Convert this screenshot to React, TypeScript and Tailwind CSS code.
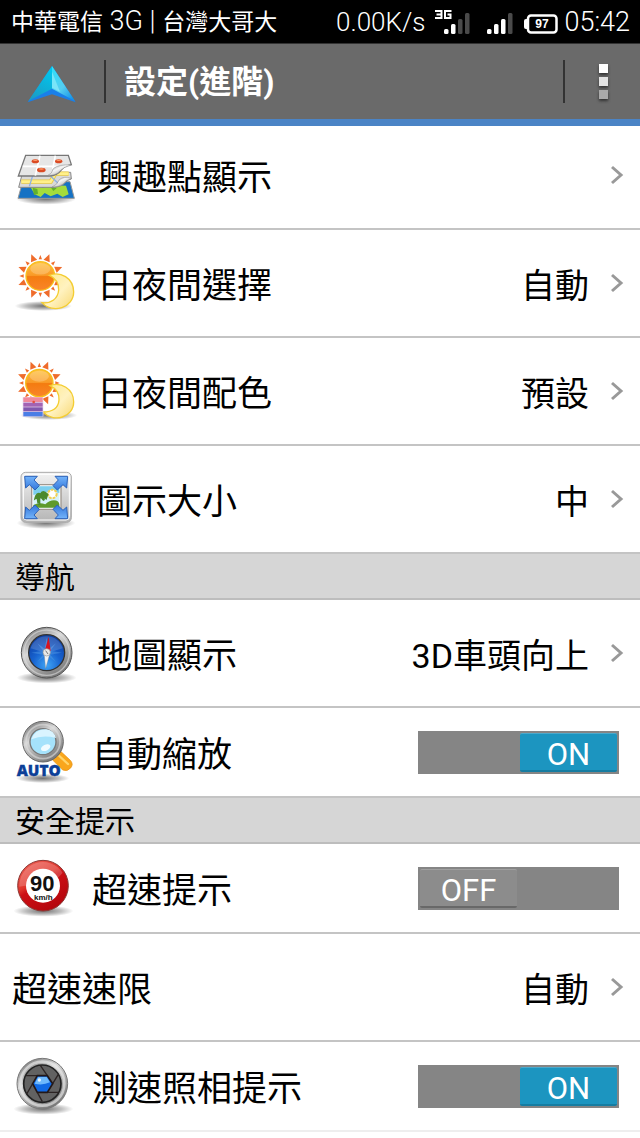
import { useState, type ReactNode } from "react";

/* ---------- status bar ---------- */

function SignalBars({ level, label }: { level: number; label?: string }) {
  const bars = [
    { x: 9, y: 20, h: 5 },
    { x: 16, y: 15, h: 10 },
    { x: 23, y: 10, h: 15 },
    { x: 30, y: 4, h: 21 },
  ];
  return (
    <svg viewBox="0 0 36 26" className="h-[26px] w-9" aria-label="signal">
      {label && (
        <g fill="none" stroke="#fff" strokeWidth="2">
          <path d="M0 2h6.500v7H0M1.500 5.500h5" />
          <path d="M16.500 2H10v7h5.500V5.500H12.500" />
        </g>
      )}
      {bars.map((b, i) => (
        <rect key={b.x} x={b.x} y={b.y} width="4.500" height={b.h} rx="1.500" fill={i < level ? "#fff" : "#4a4a4a"} />
      ))}
    </svg>
  );
}

function Battery() {
  return (
    <svg viewBox="0 0 34 20" className="mt-1 h-5 w-[34px]" aria-label="battery">
      <path d="M0 7q0-2 2-2h2v10H2q-2 0-2-2z" fill="#fff" />
      <rect x="4" y="1.500" width="28.500" height="17" rx="3" fill="none" stroke="#fff" strokeWidth="2.500" />
      <text x="18" y="14" textAnchor="middle" fontSize="12" fontWeight="700" fill="#fff" className="font-['Liberation_Sans',sans-serif]">
        97
      </text>
    </svg>
  );
}

function StatusBar() {
  return (
    <div className="flex h-11 items-center justify-between border-b border-[#333] bg-black pl-[11px] pr-[10px] text-white">
      <span className="whitespace-nowrap text-[23px] leading-8">
        中華電信<span className="text-[27px] font-light"> 3G | </span>台灣大哥大
      </span>
      <div className="flex items-center">
        <span className="mr-[10px] text-[26px] font-light leading-8">0.00K/s</span>
        <SignalBars level={2} label="3G" />
        <span className="ml-[7px] mr-[10px] flex">
          <SignalBars level={3} />
        </span>
        <Battery />
        <span className="ml-[6px] text-[27px] font-light leading-8">05:42</span>
      </div>
    </div>
  );
}

/* ---------- title bar ---------- */

function Logo() {
  return (
    <svg viewBox="0 0 150 114" className="mt-1 h-[38px] w-[50px]" aria-hidden="true">
      <defs>
        <linearGradient id="logoL" x1="0.700" y1="0" x2="0.300" y2="1">
          <stop offset="0" stopColor="#00c6ee" />
          <stop offset="1" stopColor="#1b9cc4" />
        </linearGradient>
        <linearGradient id="logoR" x1="0" y1="0" x2="0.800" y2="1">
          <stop offset="0" stopColor="#2fe0fa" />
          <stop offset="0.600" stopColor="#55cdf0" />
          <stop offset="1" stopColor="#1594e8" />
        </linearGradient>
      </defs>
      <path d="M75 3 2 112l73-24 71 24z" fill="#1a7fe8" />
      <path d="M75 3 4 108l71-37z" fill="url(#logoL)" />
      <path d="M75 3v68l69 37z" fill="url(#logoR)" />
      <path d="M75 20v48l24 12z" fill="#a4f2fb" opacity="0.550" />
    </svg>
  );
}

function TitleBar() {
  return (
    <header className="relative z-10 flex h-[82px] items-center border-b-[7px] border-[#4b84c6] bg-[#6a6a6a] pl-[27px] pr-[13px] text-white">
      <Logo />
      <span className="ml-[27px] h-[43px] w-[2px] bg-[#333]" />
      <h1 className="ml-[18px] flex-1 text-[32px] font-bold leading-10">設定(進階)</h1>
      <span className="h-[43px] w-[2px] bg-[#333]" />
      <button type="button" aria-label="選單" className="ml-[14px] flex h-12 w-12 flex-col items-center justify-center gap-1">
        <span className="h-[9px] w-[9px] bg-white shadow-[0_2px_3px_#333]" />
        <span className="h-[9px] w-[9px] bg-[#e2e2e2] shadow-[0_2px_3px_#333]" />
        <span className="h-[9px] w-[9px] bg-[#aaa] shadow-[0_2px_3px_#333]" />
      </button>
    </header>
  );
}

/* ---------- row icons ---------- */

function IconFrame({ viewBox, children }: { viewBox: string; children: ReactNode }) {
  return (
    <svg viewBox={viewBox} className="h-16 w-16 shrink-0" aria-hidden="true">
      {children}
    </svg>
  );
}

// Gradients shared by the icons, defined once for the page.
function SharedDefs() {
  return (
    <svg className="absolute h-0 w-0" aria-hidden="true">
      <defs>
        <radialGradient id="shade">
          <stop offset="0" stopColor="#000" stopOpacity="0.550" />
          <stop offset="0.600" stopColor="#000" stopOpacity="0.250" />
          <stop offset="1" stopColor="#000" stopOpacity="0" />
        </radialGradient>
        <linearGradient id="sun" x1="0" y1="0" x2="0" y2="1">
          <stop offset="0" stopColor="#ffc13a" />
          <stop offset="0.480" stopColor="#f99a28" />
          <stop offset="0.520" stopColor="#f47c10" />
          <stop offset="1" stopColor="#f9852a" />
        </linearGradient>
        <linearGradient id="moon" x1="0" y1="0" x2="1" y2="1">
          <stop offset="0" stopColor="#ffe98a" />
          <stop offset="0.550" stopColor="#fff2c0" />
          <stop offset="1" stopColor="#f8d874" />
        </linearGradient>
        <linearGradient id="steel" x1="0.200" y1="0" x2="0.800" y2="1">
          <stop offset="0" stopColor="#777" />
          <stop offset="0.350" stopColor="#d8d8d8" />
          <stop offset="0.650" stopColor="#a5a5a5" />
          <stop offset="1" stopColor="#6c6c6c" />
        </linearGradient>
        <linearGradient id="panel" x1="0" y1="0" x2="0" y2="1">
          <stop offset="0" stopColor="#f3f3f3" />
          <stop offset="1" stopColor="#b4b4b4" />
        </linearGradient>
        <linearGradient id="arrow" x1="0" y1="0" x2="0" y2="1">
          <stop offset="0" stopColor="#74b4fa" />
          <stop offset="1" stopColor="#3377dc" />
        </linearGradient>
        <radialGradient id="blue" cx="0.500" cy="0.850" r="0.800">
          <stop offset="0" stopColor="#3fa4f5" />
          <stop offset="0.500" stopColor="#1762cf" />
          <stop offset="1" stopColor="#0d3fa5" />
        </radialGradient>
        <linearGradient id="red" x1="0" y1="0" x2="0.600" y2="1">
          <stop offset="0" stopColor="#f0695f" />
          <stop offset="0.450" stopColor="#e0352c" />
          <stop offset="0.550" stopColor="#cc1016" />
          <stop offset="1" stopColor="#b5060d" />
        </linearGradient>
        <linearGradient id="curl" x1="0" y1="0" x2="1" y2="1">
          <stop offset="0" stopColor="#8a8a8a" />
          <stop offset="0.400" stopColor="#f6f6f6" />
          <stop offset="1" stopColor="#8f8f8f" />
        </linearGradient>
      </defs>
    </svg>
  );
}

function MapLayersIcon() {
  return (
    <IconFrame viewBox="42 12 192 192">
      <ellipse cx="138" cy="180" rx="90" ry="17" fill="url(#shade)" />
      <path d="M68 128h142l13 50H54z" fill="#1672c4" stroke="#999" strokeWidth="3" />
      <path d="M90 142l24-6 14 10 26-8 44 2 8 26-18 8-16-10-20 8-18-10-12 12-18-8z" fill="#a4dc3c" />
      <path d="M98 146l14 4 2 14-12 4zM150 142l20 6-10 8z" fill="#62b02c" />
      <path d="M68 100h144l2 20q-12 2-20 12t-30 13H56z" fill="#d9d9d9" stroke="#888" strokeWidth="3" />
      <path d="M64 128h88l14-24h40" fill="none" stroke="#e9c93c" strokeWidth="13" />
      <path d="M64 128h88l14-24h40" fill="none" stroke="#fff08a" strokeWidth="8" />
      <path d="M152 112l28 26M100 104l-12 38" stroke="#8eb0e4" strokeWidth="4" />
      <path d="M156 144q16-6 22-22 14-12 36-4-16 6-26 18-10 8-32 8z" fill="url(#curl)" stroke="#888" strokeWidth="1.500" />
      <path d="M77 49h128l9 28q-20 2-32 18-10 15-34 16H55z" fill="#e6e6e6" stroke="#777" strokeWidth="4" />
      <path d="M68 82h116M120 50l-14 60M166 50l-8 40" stroke="#fff" strokeWidth="5" />
      <path d="M144 109q12-4 16-20 16-14 54-11-24 6-34 18-12 14-36 13z" fill="url(#curl)" stroke="#888" strokeWidth="1.500" />
      <g fill="#db4b24">
        <ellipse cx="106" cy="67" rx="11" ry="6" />
        <ellipse cx="176" cy="67" rx="11" ry="6" />
        <ellipse cx="124" cy="93" rx="13" ry="7" />
      </g>
      <g fill="#ff9d6a">
        <ellipse cx="106" cy="64" rx="7" ry="2" />
        <ellipse cx="176" cy="64" rx="7" ry="2" />
        <ellipse cx="124" cy="90" rx="8" ry="2" />
      </g>
    </IconFrame>
  );
}

function Sun({ cx, cy, r }: { cx: number; cy: number; r: number }) {
  return (
    <g transform={`translate(${cx} ${cy})`}>
      {Array.from({ length: 16 }, (_, i) => (
        <path
          key={i}
          transform={`rotate(${i * 22.5})`}
          d={i % 2 ? `M-10 ${-r - 6}L0 ${-r - 28}L10 ${-r - 6}z` : `M-5 ${-r - 7}L0 ${-r - 20}L5 ${-r - 7}z`}
          fill="#ef6c2b"
        />
      ))}
      <circle r={r} fill="url(#sun)" stroke="#f8bf1c" strokeWidth="4" />
      <ellipse cx="0" cy={-r / 2} rx={r * 0.7} ry={r * 0.4} fill="#fff" opacity="0.220" />
    </g>
  );
}

function DayNightIcon() {
  return (
    <IconFrame viewBox="42 21 192 192">
      <ellipse cx="130" cy="186" rx="86" ry="15" fill="url(#shade)" />
      <Sun cx={121} cy={96} r={43} />
      <path
        d="M148 94c32-14 73 8 73 50 0 46-62 68-95 32 28 3 48-12 50-38 1-20-10-36-28-44z"
        fill="url(#moon)"
        stroke="#f4cd32"
        strokeWidth="4"
      />
    </IconFrame>
  );
}

function DayNightColorIcon() {
  return (
    <IconFrame viewBox="42 15 192 192">
      <ellipse cx="146" cy="184" rx="86" ry="14" fill="url(#shade)" />
      <Sun cx={118} cy={87} r={41} />
      <path
        d="M150 95c32-12 71 8 71 49 0 46-60 64-92 30 28 0 46-12 48-36 1-20-10-35-27-43z"
        fill="url(#moon)"
        stroke="#f4cd32"
        strokeWidth="4"
      />
      <path d="M68 130h62v58H68z" fill="#e9d8f0" />
      <path d="M70 130h58v14H70z" fill="#f08a9c" />
      <path d="M70 146h58v12H70z" fill="#a363b4" />
      <path d="M70 160h58v12H70z" fill="#8258ae" />
      <path d="M70 174h58v13H70z" fill="#4a7ee6" />
      <circle cx="101" cy="144" r="4" fill="#e4503c" />
    </IconFrame>
  );
}

function ResizeIcon() {
  const arrow = "M74 52h38l-10 11 16 17-13 13-17-16-11 10z";
  return (
    <IconFrame viewBox="42 24 192 192">
      <ellipse cx="138" cy="192" rx="88" ry="18" fill="url(#shade)" />
      <rect x="63" y="40" width="151" height="150" rx="14" fill="url(#panel)" stroke="#aaa" strokeWidth="3" />
      <rect x="70" y="46" width="138" height="137" rx="10" fill="none" stroke="#fff" strokeWidth="3" />
      <path d="M95 77h88v74H95z" fill="#fff" stroke="#a09890" strokeWidth="4" />
      <path d="M100 82h78v64h-78z" fill="#d6f2fb" />
      <path d="M100 82h78v20q-38-10-78 6z" fill="#7ccfef" />
      <circle cx="157" cy="105" r="13" fill="#fff" stroke="#f1cf52" strokeWidth="6" strokeDasharray="8 3" />
      <path d="M100 146v-8q18-10 36-2 12-12 26-12t16 12v10z" fill="#5f9a2c" />
      <path d="M118 138V106M106 118q4-18 16-12 6-14 20 0l-4 12-10-8 4 14-10-12-8 14-2-12z" stroke="#4b8a2d" strokeWidth="6" fill="#4b8a2d" />
      <g fill="url(#arrow)" stroke="#2d62b8" strokeWidth="3" strokeLinejoin="round">
        <path d={arrow} />
        <path d={arrow} transform="matrix(-1 0 0 1 277 0)" />
        <path d={arrow} transform="matrix(1 0 0 -1 0 231)" />
        <path d={arrow} transform="matrix(-1 0 0 -1 277 231)" />
      </g>
    </IconFrame>
  );
}

function CompassIcon() {
  return (
    <IconFrame viewBox="42 18 192 192">
      <ellipse cx="140" cy="188" rx="90" ry="17" fill="url(#shade)" />
      <circle cx="140" cy="113" r="76" fill="url(#steel)" stroke="#555" strokeWidth="3" />
      <circle cx="140" cy="113" r="68" fill="none" stroke="#ddd" strokeWidth="4" opacity="0.600" />
      <circle cx="140" cy="113" r="54" fill="url(#blue)" stroke="#333" strokeWidth="4" />
      <path
        d="M140 68l6 34 22-17-17 22 35 6-35 6 17 22-22-17-6 34-6-34-22 17 17-22-35-6 35-6-17-22 22 17z"
        fill="#4f97e4"
        opacity="0.500"
      />
      <path d="M92 100a50 50 0 0 1 96 0q-48 20-96 0z" fill="#fff" opacity="0.160" />
      <path d="M146 65l-12 43h18z" fill="#d8131f" />
      <path d="M137 160l-5-48 18 2z" fill="#f4f4f4" stroke="#888" strokeWidth="1" />
      <circle cx="140" cy="112" r="11" fill="#e8e8e8" stroke="#999" strokeWidth="2" />
      <path d="M137 107l7 10" stroke="#777" strokeWidth="3" />
    </IconFrame>
  );
}

function AutoZoomIcon() {
  return (
    <IconFrame viewBox="42 30 192 192">
      <ellipse cx="128" cy="205" rx="80" ry="14" fill="url(#shade)" />
      <path d="M158 150l24-26 28 26q12 12 2 24t-24 6z" fill="#f9a61c" stroke="#e58f12" strokeWidth="2" />
      <path d="M178 138l26 24" stroke="#ffd56a" strokeWidth="7" strokeLinecap="round" />
      <circle cx="129" cy="95" r="61" fill="url(#steel)" stroke="#666" strokeWidth="3" />
      <circle cx="129" cy="95" r="51" fill="none" stroke="#ddd" strokeWidth="5" opacity="0.600" />
      <circle cx="129" cy="95" r="39" fill="#a5e2fb" stroke="#777" strokeWidth="4" />
      <path d="M94 88q12-32 46-30 22 4 28 26-40-10-74 4z" fill="#d9f4ff" />
      <ellipse cx="137" cy="113" rx="15" ry="9" fill="#f0fbff" transform="rotate(-25 137 113)" />
      <text
        x="116"
        y="199"
        textAnchor="middle"
        fontSize="46"
        fontWeight="800"
        fill="#0c3f98"
        stroke="#0c3f98"
        strokeWidth="1"
        className="font-['Open_Sans',sans-serif]"
      >
        AUTO
      </text>
    </IconFrame>
  );
}

function SpeedLimitIcon() {
  return (
    <IconFrame viewBox="42 18 192 192">
      <ellipse cx="130" cy="183" rx="90" ry="17" fill="url(#shade)" />
      <circle cx="129" cy="107" r="76" fill="url(#red)" stroke="#8b3a36" strokeWidth="3" />
      <circle cx="129" cy="107" r="51" fill="#fff" />
      <path d="M58 110a71 71 0 0 1 130-42q-20 26-50 30-40 4-80 12z" fill="#fff" opacity="0.200" />
      <text textAnchor="middle" fill="#111" fontWeight="700" className="font-['Liberation_Sans',sans-serif]">
        <tspan x="127" y="122" fontSize="66">90</tspan>
        <tspan x="130" y="149" fontSize="24">km/h</tspan>
      </text>
    </IconFrame>
  );
}

function CameraIcon() {
  return (
    <IconFrame viewBox="42 30 192 192">
      <ellipse cx="130" cy="195" rx="90" ry="17" fill="url(#shade)" />
      <circle cx="127" cy="119" r="76" fill="url(#steel)" stroke="#777" strokeWidth="3" />
      <circle cx="127" cy="119" r="66" fill="none" stroke="#eee" strokeWidth="8" opacity="0.600" />
      <circle cx="127" cy="119" r="56" fill="#626262" stroke="#222" strokeWidth="5" />
      {/* each blade edge carries one side of the hexagon out to the ring */}
      <path
        d="M112 95H78M142 95l-21-31M158 119l17-28M142 145h34M112 145l15 28M98 119l-18 31"
        stroke="#2c2424"
        strokeWidth="4"
      />
      <path d="M112 95h30l16 24-16 26h-30l-14-26z" fill="#1169e4" stroke="#231818" strokeWidth="5" />
      <path d="M114 99h26l10 16q-22 10-46 4z" fill="#6eb8fc" />
      <circle cx="118" cy="108" r="5" fill="#e5f5ff" />
    </IconFrame>
  );
}

/* ---------- list ---------- */

function SectionTitle({ children }: { children: ReactNode }) {
  return (
    <h2 className="flex h-[46px] items-center border-b-2 border-[#bdbdbd] bg-[#d6d6d6] px-[15px] pt-1 text-[30px] font-normal leading-10">
      {children}
    </h2>
  );
}

function LinkRow({ icon, label, value }: { icon?: ReactNode; label: string; value?: string }) {
  return (
    <button
      type="button"
      className={`flex h-[108px] w-full items-center border-b-2 border-[#c4c4c4] pr-4 text-left ${icon ? "pl-[14px]" : "pl-3"}`}
    >
      {icon}
      <span className={`flex-1 pt-2 text-[35px] leading-10 ${icon ? "ml-[19px]" : ""}`}>{label}</span>
      {value && <span className="pt-[6px] text-[34px] leading-10">{value}</span>}
      <svg viewBox="0 0 14 20" className="ml-[21px] h-5 w-[14px] shrink-0" fill="none" stroke="#999" strokeWidth="3" aria-hidden="true">
        <path d="M2 2l9 8-9 8" />
      </svg>
    </button>
  );
}

function SwitchRow({ id, icon, label, initial }: { id: string; icon: ReactNode; label: string; initial: boolean }) {
  const [on, setOn] = useState(initial);
  return (
    <div className="flex h-[90px] items-center border-b-2 border-[#c4c4c4] pl-[14px] pr-[21px] last:border-[#eee]">
      {icon}
      <span id={id} className="ml-[14px] flex-1 pt-2 text-[35px] leading-10">
        {label}
      </span>
      <button
        type="button"
        role="switch"
        aria-checked={on}
        aria-labelledby={id}
        onClick={() => setOn(!on)}
        className={`flex h-[43px] w-[201px] bg-[#858585] p-[2px] ${on ? "justify-end" : "justify-start"}`}
      >
        <span
          className={`flex h-full w-[97px] items-center justify-center rounded-xs border-t border-b-2 pt-[6px] text-[31px] leading-8 text-white ${
            on ? "border-t-[#4aa9cc] border-b-[#167da2] bg-[#1c95c0]" : "border-t-[#a0a0a0] border-b-[#686868] bg-[#8c8c8c]"
          }`}
        >
          {on ? "ON" : "OFF"}
        </span>
      </button>
    </div>
  );
}

export default function App() {
  return (
    <div className="min-h-screen overflow-hidden bg-white font-[Roboto,'Noto_Sans_CJK_TC',sans-serif] text-black">
      <SharedDefs />
      <StatusBar />
      <TitleBar />
      {/* the list is scrolled slightly under the title bar */}
      <main className="-mt-1">
        <LinkRow icon={<MapLayersIcon />} label="興趣點顯示" />
        <LinkRow icon={<DayNightIcon />} label="日夜間選擇" value="自動" />
        <LinkRow icon={<DayNightColorIcon />} label="日夜間配色" value="預設" />
        <LinkRow icon={<ResizeIcon />} label="圖示大小" value="中" />
        <SectionTitle>導航</SectionTitle>
        <LinkRow icon={<CompassIcon />} label="地圖顯示" value="3D車頭向上" />
        <SwitchRow id="auto-zoom" icon={<AutoZoomIcon />} label="自動縮放" initial={true} />
        <SectionTitle>安全提示</SectionTitle>
        <SwitchRow id="overspeed" icon={<SpeedLimitIcon />} label="超速提示" initial={false} />
        <LinkRow label="超速速限" value="自動" />
        <SwitchRow id="speed-camera" icon={<CameraIcon />} label="測速照相提示" initial={true} />
      </main>
    </div>
  );
}
